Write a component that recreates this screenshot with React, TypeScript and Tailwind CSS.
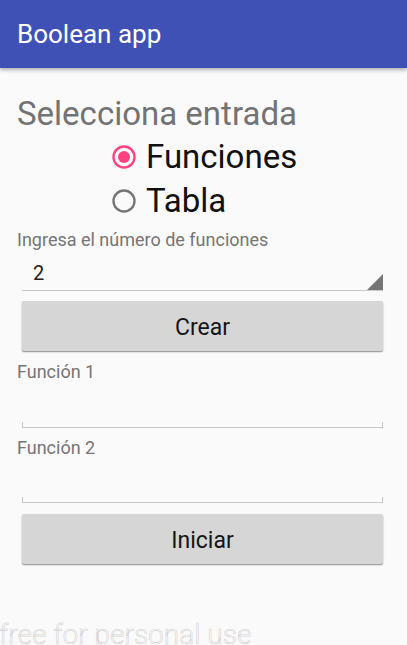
const font = { fontFamily: "Roboto, 'Noto Sans', sans-serif" };

function Radio({ checked }: { checked: boolean }) {
  return (
    <svg width="26" height="26" viewBox="0 0 26 26" className="shrink-0">
      <circle
        cx="13"
        cy="13"
        r="10.5"
        fill="none"
        stroke={checked ? "#FF4081" : "#757575"}
        strokeWidth="2.4"
      />
      {checked && <circle cx="13" cy="13" r="6" fill="#FF4081" />}
    </svg>
  );
}

function EditLine() {
  return (
    <div className="ml-[22px] h-[6px] w-[361px] border-x-[1.5px] border-b-[1.5px] border-[#c8c8c8]" />
  );
}

function GrayButton({ label }: { label: string }) {
  return (
    <button className="ml-[22px] h-[50px] w-[361px] rounded-[2px] bg-[#d6d6d6] pt-[4px] text-[23px] text-[#151515] shadow-[0_1px_1.5px_rgba(0,0,0,0.45)]">
      {label}
    </button>
  );
}

export default function App() {
  return (
    <div
      className="relative flex h-[645px] w-[407px] flex-col overflow-hidden bg-[#fafafa]"
      style={font}
    >
      <div className="z-10 flex h-[68px] shrink-0 items-center bg-[#3f51b5] px-[17px] shadow-[0_2px_4px_rgba(0,0,0,0.3)]">
        <span className="text-[26px] text-white">Boolean app</span>
      </div>

      <div className="mt-[26px] pl-[17px] text-[33px] leading-[40px] text-[#737373]">
        Selecciona entrada
      </div>

      <div className="mt-[1px] flex flex-col pl-[111px]">
        <div className="flex h-[44px] items-center gap-[9px]">
          <Radio checked />
          <span className="text-[33px] text-[#111]">Funciones</span>
        </div>
        <div className="flex h-[44px] items-center gap-[9px]">
          <Radio checked={false} />
          <span className="text-[33px] text-[#111]">Tabla</span>
        </div>
      </div>

      <div className="mt-[6px] pl-[17px] text-[18px] leading-[22px] text-[#757575]">
        Ingresa el número de funciones
      </div>

      <div className="relative ml-[22px] h-[40px] w-[361px] border-b-[1.5px] border-[#c8c8c8]">
        <span className="absolute top-[10px] left-[11px] text-[20px] leading-[24px] text-[#222]">
          2
        </span>
        <svg
          width="16"
          height="16"
          viewBox="0 0 16 16"
          className="absolute right-0 bottom-0"
        >
          <polygon points="16,0 16,16 0,16" fill="#757575" />
        </svg>
      </div>

      <div className="mt-[10px] flex flex-col">
        <GrayButton label="Crear" />
      </div>

      <div className="mt-[10px] pl-[17px] text-[18px] leading-[22px] text-[#757575]">
        Función 1
      </div>
      <div className="mt-[39px]">
        <EditLine />
      </div>

      <div className="mt-[9px] pl-[17px] text-[18px] leading-[22px] text-[#757575]">
        Función 2
      </div>
      <div className="mt-[38px]">
        <EditLine />
      </div>

      <div className="mt-[11px] flex flex-col">
        <GrayButton label="Iniciar" />
      </div>

      <div className="absolute bottom-[-7px] left-[-1px] text-[28px] leading-[34px] font-light text-[#fdfdfd] [-webkit-text-stroke:0.6px_#d4d4d4]">
        free for personal use
      </div>
    </div>
  );
}
